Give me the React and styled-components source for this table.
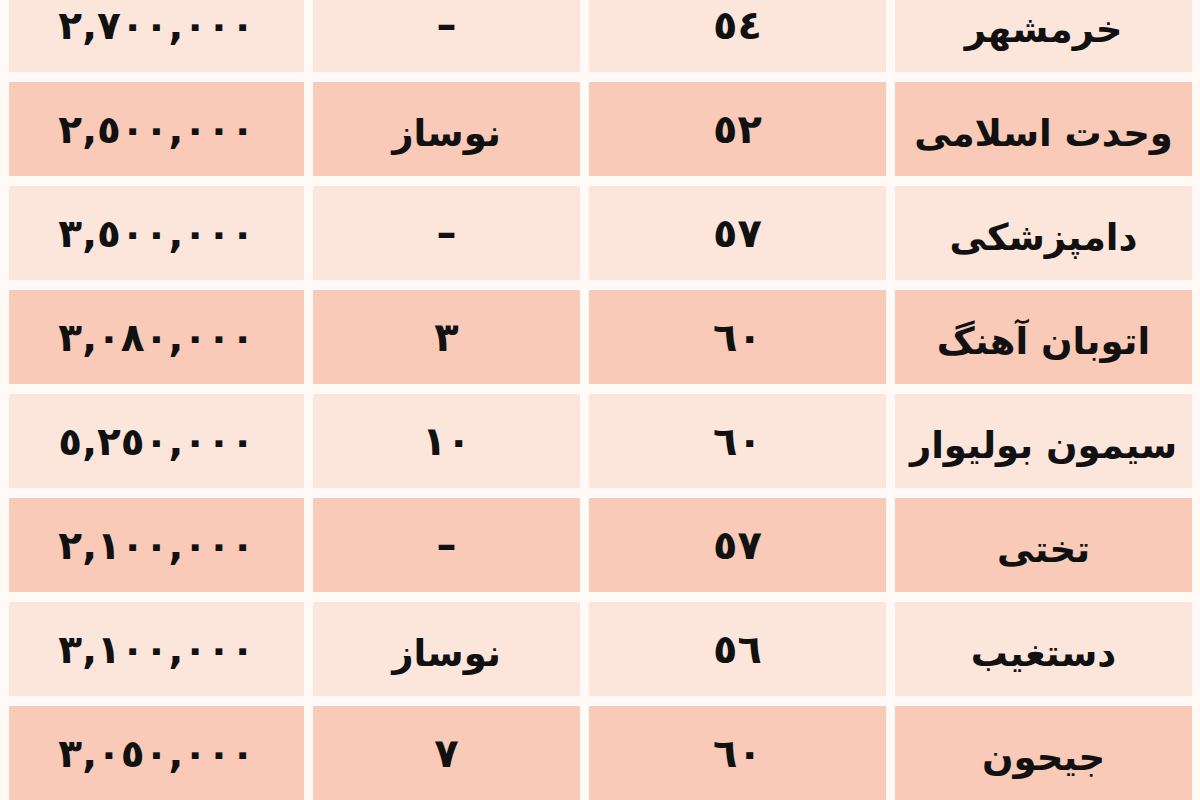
import React from "react";
import styled, { createGlobalStyle } from "styled-components";

const Global = createGlobalStyle`
  html, body { margin: 0; padding: 0; background: #fffaf6; }
  body { width: 1200px; height: 800px; overflow: hidden; }
`;

const Table = styled.div`
  direction: rtl;
  display: grid;
  grid-template-columns: 297px 297px 267px 295px;
  grid-auto-rows: 94px;
  column-gap: 9px;
  row-gap: 10px;
  padding: 0 8px 0 9px;
  margin-top: -22px;
  font-family: "DejaVu Sans", sans-serif;
  font-weight: bold;
  color: #111;
`;

const Cell = styled.div`
  background: ${(p) => (p.$dark ? "#f8cab7" : "#fce6dc")};
  display: flex;
  align-items: center;
  justify-content: center;
  padding-top: ${(p) => (p.$num ? "0" : "8px")};
  font-size: ${(p) => (p.$price ? "39px" : p.$num ? "40px" : "37px")};
  direction: ${(p) => (p.$ltr ? "ltr" : "rtl")};
  white-space: nowrap;
  letter-spacing: ${(p) => (p.$price ? "3px" : "0")};
`;

const rows = [
  ["خرمشهر", "٥٤", "–", "٢,٧٠٠,٠٠٠"],
  ["وحدت اسلامی", "٥٢", "نوساز", "٢,٥٠٠,٠٠٠"],
  ["دامپزشکی", "٥٧", "–", "٣,٥٠٠,٠٠٠"],
  ["اتوبان آهنگ", "٦٠", "٣", "٣,٠٨٠,٠٠٠"],
  ["سیمون بولیوار", "٦٠", "١٠", "٥,٢٥٠,٠٠٠"],
  ["تختی", "٥٧", "–", "٢,١٠٠,٠٠٠"],
  ["دستغیب", "٥٦", "نوساز", "٣,١٠٠,٠٠٠"],
  ["جیحون", "٦٠", "٧", "٣,٠٥٠,٠٠٠"],
];

export default function App() {
  return (
    <>
      <Global />
      <Table>
        {rows.map((r, i) => {
          const dark = i % 2 === 1;
          return (
            <React.Fragment key={i}>
              <Cell $dark={dark}>{r[0]}</Cell>
              <Cell $dark={dark} $num>{r[1]}</Cell>
              <Cell $dark={dark} $num={r[2] !== "نوساز"}>{r[2]}</Cell>
              <Cell $dark={dark} $num $ltr $price>{r[3]}</Cell>
            </React.Fragment>
          );
        })}
      </Table>
    </>
  );
}
